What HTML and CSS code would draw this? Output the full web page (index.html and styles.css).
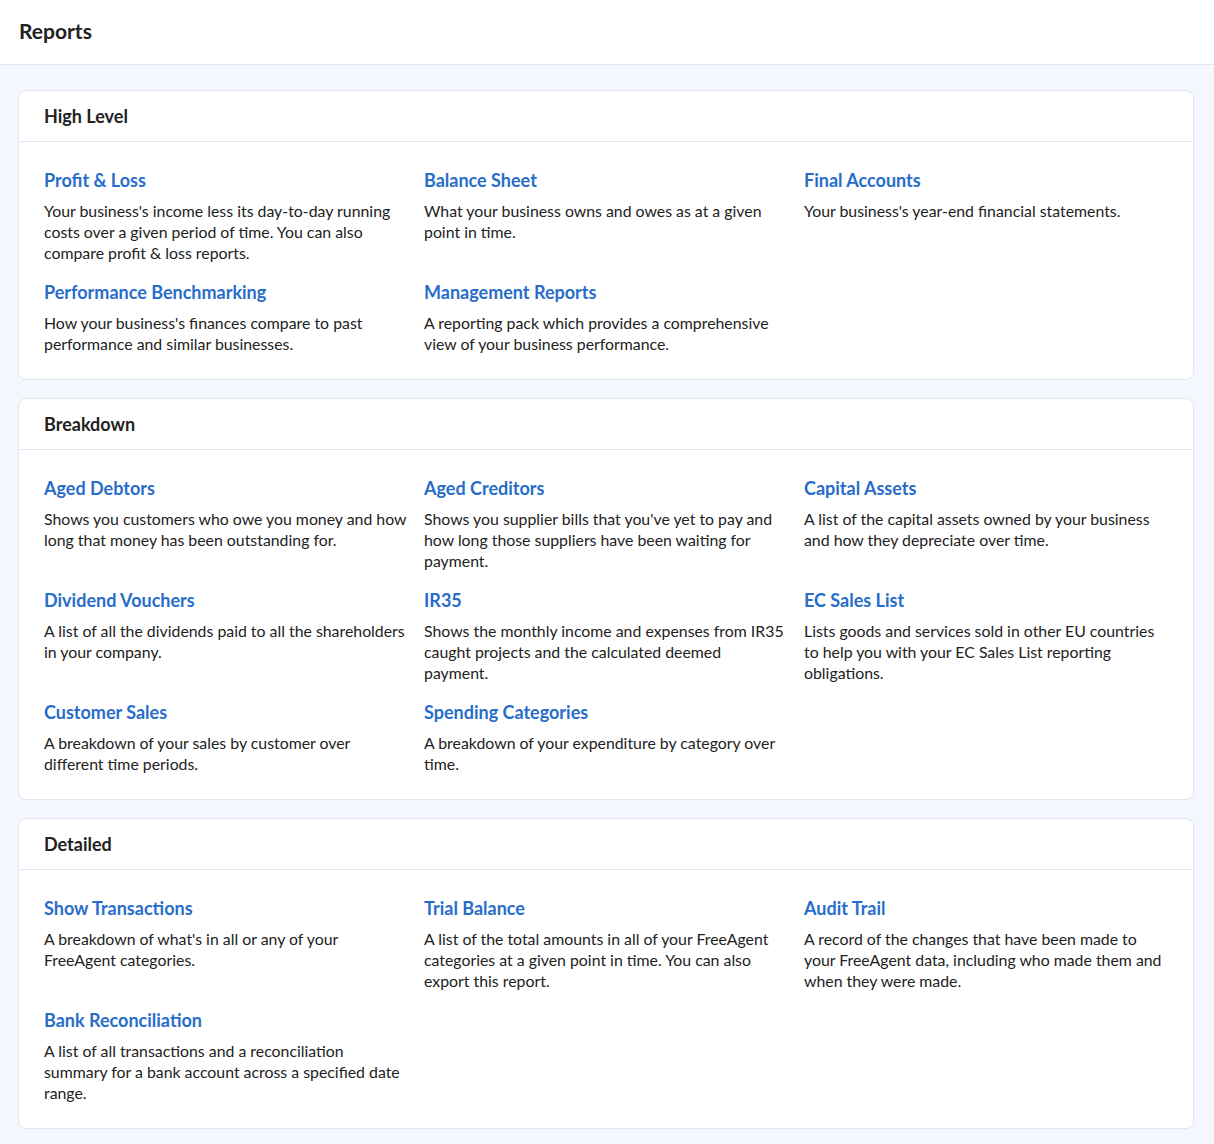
FILE: index.html
```html
<!DOCTYPE html>
<html lang="en">
<head>
    <meta charset="UTF-8">
    <meta name="viewport" content="width=device-width, initial-scale=1.0">
    <title>Reports</title>
    <link rel="stylesheet" href="styles.css">
</head>
<body>
    <header class="page-header">
        <h1>Reports</h1>
    </header>

    <main class="content">
        <section class="card">
            <h2 class="card-title">High Level</h2>
            <div class="report-grid">
                <div class="report">
                    <a href="#">Profit &amp; Loss</a>
                    <p>Your business's income less its day-to-day running costs over a given period of time. You can also compare profit &amp; loss reports.</p>
                </div>
                <div class="report">
                    <a href="#">Balance Sheet</a>
                    <p>What your business owns and owes as at a given point in time.</p>
                </div>
                <div class="report">
                    <a href="#">Final Accounts</a>
                    <p>Your business's year-end financial statements.</p>
                </div>
                <div class="report">
                    <a href="#">Performance Benchmarking</a>
                    <p>How your business's finances compare to past performance and similar businesses.</p>
                </div>
                <div class="report">
                    <a href="#">Management Reports</a>
                    <p>A reporting pack which provides a comprehensive view of your business performance.</p>
                </div>
            </div>
        </section>

        <section class="card">
            <h2 class="card-title">Breakdown</h2>
            <div class="report-grid">
                <div class="report">
                    <a href="#">Aged Debtors</a>
                    <p>Shows you customers who owe you money and how long that money has been outstanding for.</p>
                </div>
                <div class="report">
                    <a href="#">Aged Creditors</a>
                    <p>Shows you supplier bills that you've yet to pay and how long those suppliers have been waiting for payment.</p>
                </div>
                <div class="report">
                    <a href="#">Capital Assets</a>
                    <p>A list of the capital assets owned by your business and how they depreciate over time.</p>
                </div>
                <div class="report">
                    <a href="#">Dividend Vouchers</a>
                    <p>A list of all the dividends paid to all the shareholders in your company.</p>
                </div>
                <div class="report">
                    <a href="#">IR35</a>
                    <p>Shows the monthly income and expenses from IR35 caught projects and the calculated deemed payment.</p>
                </div>
                <div class="report">
                    <a href="#">EC Sales List</a>
                    <p>Lists goods and services sold in other EU countries to help you with your EC Sales List reporting obligations.</p>
                </div>
                <div class="report">
                    <a href="#">Customer Sales</a>
                    <p>A breakdown of your sales by customer over different time periods.</p>
                </div>
                <div class="report">
                    <a href="#">Spending Categories</a>
                    <p>A breakdown of your expenditure by category over time.</p>
                </div>
            </div>
        </section>

        <section class="card">
            <h2 class="card-title">Detailed</h2>
            <div class="report-grid">
                <div class="report">
                    <a href="#">Show Transactions</a>
                    <p>A breakdown of what's in all or any of your FreeAgent categories.</p>
                </div>
                <div class="report">
                    <a href="#">Trial Balance</a>
                    <p>A list of the total amounts in all of your FreeAgent categories at a given point in time. You can also export this report.</p>
                </div>
                <div class="report">
                    <a href="#">Audit Trail</a>
                    <p>A record of the changes that have been made to your FreeAgent data, including who made them and when they were made.</p>
                </div>
                <div class="report">
                    <a href="#">Bank Reconciliation</a>
                    <p>A list of all transactions and a reconciliation summary for a bank account across a specified date range.</p>
                </div>
            </div>
        </section>
    </main>
</body>
</html>
```

FILE: styles.css
```css
* {
    box-sizing: border-box;
}

body {
    margin: 0;
    background-color: #f4f7fd;
    font-family: Lato, "Liberation Sans", sans-serif;
    color: #222;
}

.page-header {
    background-color: #ffffff;
    border-bottom: 1px solid #e2e6ee;
    height: 65px;
    display: flex;
    align-items: center;
    padding: 0 19px 3px 19px;
}

.page-header h1 {
    margin: 0;
    font-size: 21px;
    font-weight: 700;
    color: #222;
}

.content {
    padding: 25px 20px 14px 18px;
    display: flex;
    flex-direction: column;
    gap: 18px;
}

.card {
    background-color: #ffffff;
    border: 1px solid #e2e6ee;
    border-radius: 8px;
}

.card-title {
    margin: 0;
    height: 51px;
    display: flex;
    align-items: center;
    padding: 0 25px;
    border-bottom: 1px solid #e2e6ee;
    font-size: 18px;
    font-weight: 700;
    color: #222;
}

.report-grid {
    display: grid;
    grid-template-columns: repeat(3, 363.5px);
    column-gap: 16.5px;
    row-gap: 17px;
    padding: 26px 19px 25px 25px;
}

.report a {
    display: block;
    color: #286dca;
    text-decoration: none;
    font-size: 18px;
    font-weight: 700;
    line-height: 24px;
}

.report p {
    margin: 8px 0 0 0;
    font-size: 15.85px;
    line-height: 21px;
    color: #222;
}
```
